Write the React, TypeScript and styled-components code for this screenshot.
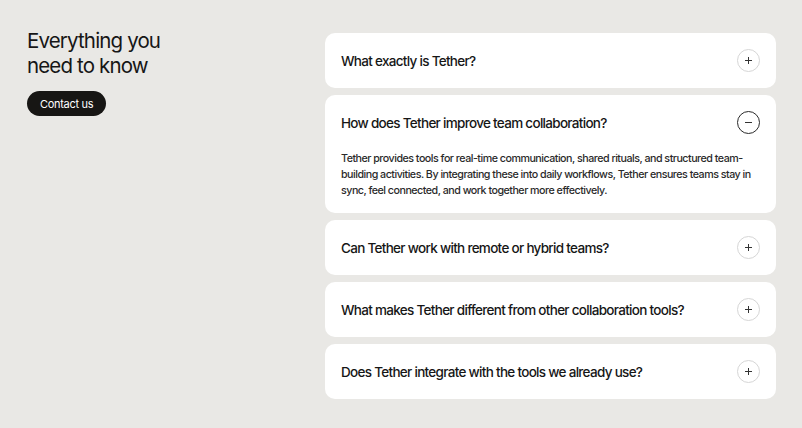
import React, { useState } from "react";
import styled, { createGlobalStyle } from "styled-components";

const Global = createGlobalStyle`
  html, body { margin: 0; padding: 0; background: #e9e8e5; }
  body { font-family: Inter, "Noto Sans", sans-serif; color: #141414; -webkit-font-smoothing: antialiased; }
  * { box-sizing: border-box; }
`;

const Page = styled.div`
  display: flex;
  justify-content: space-between;
  align-items: flex-start;
  padding: 28px 26px 0 27px;
  min-height: 428px;
`;

const Intro = styled.div`
  display: flex;
  flex-direction: column;
  align-items: flex-start;
`;

const Title = styled.h2`
  margin: 0;
  font-size: 20.5px;
  line-height: 25px;
  font-weight: 400;
  letter-spacing: -0.85px;
  color: #161616;
`;

const ContactButton = styled.button`
  margin-top: 13px;
  height: 25px;
  padding: 0 13px;
  border: none;
  border-radius: 999px;
  background: #171614;
  color: #fff;
  font-family: inherit;
  font-size: 11px;
  font-weight: 400;
  letter-spacing: -0.3px;
`;

const List = styled.div`
  margin-top: 5px;
  width: 451px;
  display: flex;
  flex-direction: column;
  gap: 7px;
`;

const Card = styled.div`
  background: #fff;
  border-radius: 10px;
`;

const Header = styled.div`
  height: 55px;
  padding: 0 16px;
  display: flex;
  align-items: center;
  justify-content: space-between;
  cursor: pointer;
`;

const Question = styled.span`
  font-size: 13.5px;
  font-weight: 500;
  letter-spacing: -0.7px;
  color: #161616;
`;

const IconCircle = styled.span<{ $open: boolean }>`
  width: 23px;
  height: 23px;
  border-radius: 50%;
  border: 1px solid ${(p) => (p.$open ? "#2a2a2a" : "#d6d6d6")};
  display: flex;
  align-items: center;
  justify-content: center;
  color: #333;
`;

const Answer = styled.p`
  margin: 0;
  padding: 1px 12px 14px 16px;
  font-size: 10.7px;
  line-height: 16px;
  font-weight: 450;
  letter-spacing: -0.5px;
  color: #2a2a2a;
`;

const faqs = [
  { q: "What exactly is Tether?", a: "" },
  {
    q: "How does Tether improve team collaboration?",
    a: "Tether provides tools for real-time communication, shared rituals, and structured team-building activities. By integrating these into daily workflows, Tether ensures teams stay in sync, feel connected, and work together more effectively.",
  },
  { q: "Can Tether work with remote or hybrid teams?", a: "" },
  { q: "What makes Tether different from other collaboration tools?", a: "" },
  { q: "Does Tether integrate with the tools we already use?", a: "" },
];

const Icon = ({ open }: { open: boolean }) => (
  <IconCircle $open={open}>
    <svg width="9" height="9" viewBox="0 0 9 9">
      <path d="M1 4.5h7" stroke="currentColor" strokeWidth="1" />
      {!open && <path d="M4.5 1v7" stroke="currentColor" strokeWidth="1" />}
    </svg>
  </IconCircle>
);

export default function App() {
  const [open, setOpen] = useState(1);
  return (
    <>
      <Global />
      <Page>
        <Intro>
          <Title>
            Everything you
            <br />
            need to know
          </Title>
          <ContactButton>Contact us</ContactButton>
        </Intro>
        <List>
          {faqs.map((f, i) => (
            <Card key={i}>
              <Header onClick={() => setOpen(open === i ? -1 : i)}>
                <Question>{f.q}</Question>
                <Icon open={open === i} />
              </Header>
              {open === i && <Answer>{f.a || "Yes."}</Answer>}
            </Card>
          ))}
        </List>
      </Page>
    </>
  );
}
